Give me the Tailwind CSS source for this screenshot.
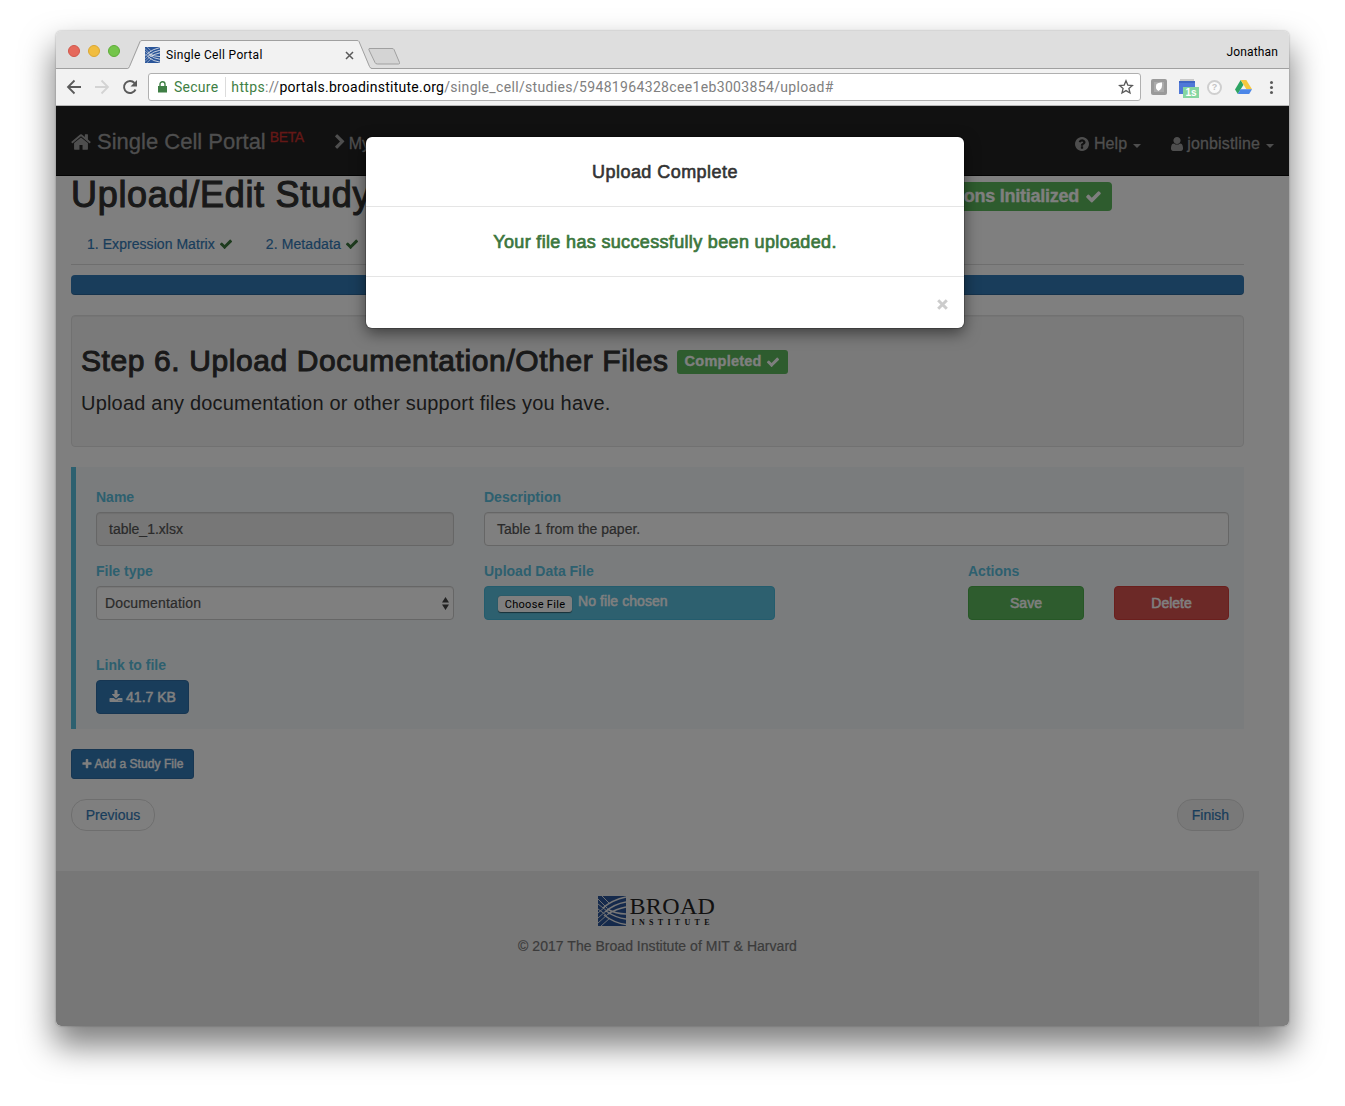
<!DOCTYPE html>
<html lang="en">
<head>
<meta charset="utf-8">
<title>Single Cell Portal</title>
<script src="https://cdn.jsdelivr.net/npm/@tailwindcss/browser@4"></script>
</head>
<body class="h-[1106px] w-[1345px] overflow-hidden bg-white px-14 pt-[31px] font-['Liberation_Sans',sans-serif] text-sm text-[#333]">
<svg class="hidden">
  <symbol id="check" viewBox="0 0 1792 1792"><path d="M1671 566q0 40-28 68l-724 724-136 136q-28 28-68 28t-68-28l-136-136-362-362q-28-28-28-68t28-68l136-136q28-28 68-28t68 28l294 295 656-657q28-28 68-28t68 28l136 136q28 28 28 68z"/></symbol>
  <symbol id="broad" viewBox="0 0 28 30">
    <path fill="#2a5599" d="M0 0h28v30H0z"/>
    <g fill="none" stroke="#eee"><path stroke-width="1.500" d="M5 12Q14 4 28 1M7 16Q16 8 28 6M8 15Q18 22 28 23M6 19Q16 27 28 28.500M10 18Q18 13 28 11M9 13Q18 18 28 18"/><path stroke-width=".9" d="M0 17L8 10M0 22L9 14M0 27L10 18M0 13L8 19M0 8L9 15M0 3L9 12M4 0L12 8M3 30L12 22"/></g>
  </symbol>
</svg>
<div class="relative h-[995px] w-[1233px] rounded-[5px] shadow-[0_18px_32px_2px_rgba(0,0,0,0.5),0_0_2px_rgba(0,0,0,0.35)]">
 <div class="flex h-full flex-col overflow-hidden rounded-[5px]">
  <!-- browser chrome -->
  <div class="relative flex h-[38px] shrink-0 items-start border-b border-[#a0a0a0] bg-[#dedede]">
    <div class="flex gap-2 pt-[14px] pl-3">
      <span class="size-3 rounded-full border border-[#d1574b] bg-[#e5695c]"></span>
      <span class="size-3 rounded-full border border-[#dba732] bg-[#f1bd40]"></span>
      <span class="size-3 rounded-full border border-[#5eac38] bg-[#74c54b]"></span>
    </div>
    <svg class="absolute top-[9px] left-[70px] h-[30px] w-[280px]" viewBox="0 0 280 30" fill="#f2f2f2" stroke="#a0a0a0"><path d="M0 28.500h2q1 0 2-2L15 1.500q.5-1 2-1H231q1.500 0 2 1L243 26.500q1 2 2.500 2V30H2z" stroke="none"/><path fill="none" d="M0 28.500h1.500q1 0 2-2L14 1.500q.5-1 2-1H231q1.500 0 2 1L243.500 26.500q1 2 2.500 2h34"/><path fill="#d4d4d4" d="M243 8.500h23q1.500 0 2 1l5.500 13q.5 1.500-1 1.500h-21q-2 0-2.500-1.500l-6-12.500q-.5-1.500.5-1.500z"/></svg>
    <div class="absolute top-[15px] left-[89px] flex h-[18px] w-[209px] items-center">
      <svg class="h-4 w-[15px]" viewBox="0 0 28 30" preserveAspectRatio="none"><use href="#broad" width="28" height="30"/></svg>
      <span class="mt-px ml-[6px] font-['Roboto',sans-serif] text-[12px] tracking-[0.33px] text-black">Single Cell Portal</span>
      <svg class="ml-auto size-[9px]" viewBox="0 0 9 9" stroke="#5a5a5a" stroke-width="1.500"><path d="M1 1l7 7M8 1l-7 7"/></svg>
    </div>
    <span class="mt-[13px] mr-[11px] ml-auto font-['Roboto',sans-serif] text-[12px] leading-4 tracking-[0.15px] text-black">Jonathan</span>
  </div>
  <div class="flex h-[37px] shrink-0 items-center border-b border-[#b6b6b6] bg-[#f2f2f2] pl-[10px]">
    <svg class="size-4" viewBox="0 0 16 16" fill="none" stroke="#5a5a5a" stroke-width="1.800"><path d="M15 8H2M8.500 1.500L2 8l6.500 6.500"/></svg>
    <svg class="ml-3 size-4" viewBox="0 0 16 16" fill="none" stroke="#d3d3d3" stroke-width="1.800"><path d="M1 8h13M7.500 1.500L14 8l-6.500 6.500"/></svg>
    <svg class="ml-3 size-4" viewBox="0 0 16 16" fill="none" stroke="#5a5a5a" stroke-width="1.900"><path d="M13.500 10.500A6 6 0 1 1 12.500 4"/><path fill="#5a5a5a" stroke="none" d="M15 1v6.500H8.500z"/></svg>
    <div class="ml-[10px] flex h-7 w-[993px] items-center rounded-[3px] border border-[#b0b0b0] bg-white pl-[9px] font-['Roboto',sans-serif] text-[14px]">
      <svg class="h-3 w-[9px]" viewBox="0 0 9 12"><path fill="#3f7f45" d="M0 5h9v6.500H0z"/><path fill="none" stroke="#3f7f45" stroke-width="1.400" d="M2 5V3.200a2.500 2.500 0 0 1 5 0V5"/></svg>
      <span class="ml-[7px] tracking-[0.25px] text-[#3f7f45]">Secure</span>
      <span class="mr-[5px] ml-[7px] h-5 w-px bg-[#dcdcdc]"></span>
      <span class="tracking-[0.34px] whitespace-nowrap text-[#808080]"><span class="text-[#3f7f45]">https</span>://<span class="tracking-[0.25px] text-black">portals.broadinstitute.org</span>/single_cell/studies/59481964328cee1eb3003854/upload#</span>
      <svg class="mr-[6px] ml-auto size-4" viewBox="0 0 16 16" fill="none" stroke="#5a5a5a" stroke-width="1.300"><path d="M8 1.800l1.800 4.300 4.600.4-3.500 3 1.100 4.500L8 11.600 4 14l1.100-4.500-3.500-3 4.600-.4z"/></svg>
    </div>
    <svg class="ml-[10px] size-4" viewBox="0 0 16 16"><rect width="16" height="16" rx="2" fill="#9a9a9a"/><path fill="#ababab" d="M3 3h10v10H3z"/><path fill="#fff" d="M5.500 5q2-1.800 5.500-1.500 1 6-3.500 8.500Q3.500 10 5.500 5z"/></svg>
    <div class="relative ml-3 h-[17px] w-4">
      <svg class="h-[17px] w-4" viewBox="0 0 16 17"><path fill="#c9c9c9" d="M1 0h14v3H1z"/><path fill="#4f78d8" d="M0 2h16v13H0z"/><path fill="#3f66c4" d="M0 2h16v2H0z"/></svg>
      <span class="absolute top-[8px] left-1 h-[11px] w-4 bg-[#85d6a0] text-center text-[10px] leading-[12px] font-bold text-white">1s</span>
    </div>
    <div class="ml-3 flex size-[15px] items-center justify-center rounded-full border-2 border-[#cfcfcf] bg-[#fafafa] text-[9px] font-bold text-[#c4c4c4]">?</div>
    <svg class="ml-[13px] h-[14px] w-[17px]" viewBox="0 0 17 14"><path fill="#2da463" d="M5.700 0L0 9.600 2.800 14 8.500 4.700z"/><path fill="#f6c83f" d="M5.700 0h5.600L17 9.300h-5.600z"/><path fill="#4b86e8" d="M5.600 9.300H17L14.200 14H2.800z"/></svg>
    <div class="ml-[18px] flex flex-col gap-[2px]"><span class="size-[3px] rounded-full bg-[#5a5a5a]"></span><span class="size-[3px] rounded-full bg-[#5a5a5a]"></span><span class="size-[3px] rounded-full bg-[#5a5a5a]"></span></div>
  </div>

  <!-- page -->
  <div class="relative flex min-h-0 flex-1 flex-col bg-white">
    <nav class="flex h-[70px] shrink-0 items-center border-b border-[#080808] bg-[#222] px-[15px] pt-[3px] text-[#9d9d9d]">
      <svg class="h-[22px] w-5" viewBox="64 0 1664 1792" fill="currentColor"><path d="M1472 992v480q0 26-19 45t-45 19h-384v-384h-256v384h-384q-26 0-45-19t-19-45v-480q0-1 .5-3t.5-3l575-474 575 474q1 2 1 6zm223-69l-62 74q-8 9-21 11h-3q-13 0-21-7l-692-577-692 577q-12 8-24 7-13-2-21-11l-62-74q-8-10-7-23.500t11-21.500l719-599q32-26 76-26t76 26l244 204v-195q0-14 9-23t23-9h192q14 0 23 9t9 23v408l219 182q10 8 11 21.500t-7 23.500z"/></svg>
      <span class="ml-[6px] text-[22px] leading-7 [-webkit-text-stroke:0.3px]">Single Cell Portal</span>
      <span class="mb-[10px] ml-1 text-[14px] tracking-[-0.4px] text-[#c9302c] [-webkit-text-stroke:0.3px]">BETA</span>
      <svg class="ml-[28px] size-4" viewBox="0 0 1792 1792" fill="currentColor"><path d="M1363 877l-742 742q-19 19-45 19t-45-19l-166-166q-19-19-19-45t19-45l531-531-531-531q-19-19-19-45t19-45l166-166q19-19 45-19t45 19l742 742q19 19 19 45t-19 45z"/></svg>
      <span class="mt-[3px] ml-px text-[16px] leading-5 [-webkit-text-stroke:0.3px]">My</span>
      <div class="ml-auto flex items-center pt-1 [-webkit-text-stroke:0.3px]">
        <svg class="size-[14px]" viewBox="128 128 1536 1536" fill="currentColor"><path d="M1024 1376v-192q0-14-9-23t-23-9h-192q-14 0-23 9t-9 23v192q0 14 9 23t23 9h192q14 0 23-9t9-23zm256-672q0-88-55.500-163t-138.500-116-170-41q-243 0-371 213-15 24 8 42l132 100q7 6 19 6 16 0 25-12 53-68 86-92 34-24 86-24 48 0 85.500 26t37.500 59q0 38-20 61t-68 45q-63 28-115.500 86.500t-52.500 125.500v36q0 14 9 23t23 9h192q14 0 23-9t9-23q0-19 21.500-49.500t54.500-49.500q32-18 49-28.500t46-35 44.500-48 28-60.500 12.500-81zm384 192q0 209-103 385.500t-279.500 279.500-385.500 103-385.500-103-279.500-279.500-103-385.500 103-385.500 279.500-279.500 385.500-103 385.500 103 279.500 279.500 103 385.500z"/></svg>
        <span class="ml-[5px] text-[16px] leading-5 tracking-[0.1px]">Help</span>
        <span class="mt-[3px] ml-[6px] border-x-4 border-t-4 border-x-transparent border-t-current"></span>
        <svg class="ml-[30px] h-[14px] w-3" viewBox="256 128 1280 1536" preserveAspectRatio="none" fill="currentColor"><path d="M1536 1399q0 109-62.500 187t-150.500 78h-854q-88 0-150.500-78t-62.500-187q0-85 8.500-160.500t31.500-152 58.500-131 94-89 134.500-34.500q131 128 313 128t313-128q76 0 134.500 34.500t94 89 58.500 131 31.500 152 8.500 160.500zm-256-887q0 159-112.500 271.500t-271.500 112.500-271.500-112.500-112.500-271.500 112.500-271.500 271.500-112.500 271.500 112.500 112.500 271.500z"/></svg>
        <span class="ml-1 text-[16px] leading-5 tracking-[0.15px]">jonbistline</span>
        <span class="mt-[3px] ml-[6px] border-x-4 border-t-4 border-x-transparent border-t-current"></span>
      </div>
    </nav>
    <main class="flex w-[1203px] flex-col px-[15px]">
      <div class="flex h-[48px] items-start justify-between pr-[132px]">
        <h1 class="-mt-px text-[36px] leading-10 tracking-[0.7px] whitespace-nowrap [-webkit-text-stroke:1.1px_#333]">Upload/Edit Study</h1>
        <span class="mt-[6px] flex h-[29px] w-[240px] items-center justify-end rounded-[4px] bg-[#5cb85c] pr-[10px] text-[18px] font-bold tracking-[-0.25px] text-white [-webkit-text-stroke:0.3px]">ons Initialized<svg class="ml-[6px] size-[17px]" fill="currentColor"><use href="#check"/></svg></span>
      </div>
      <div class="flex h-[41px] items-center gap-[33px] border-b border-[#ddd] pl-4 text-[#337ab7]">
        <span class="flex items-center tracking-[0.05px] [-webkit-text-stroke:0.2px]">1. Expression Matrix<svg class="ml-1 size-[14px]" fill="#3c763d"><use href="#check"/></svg></span>
        <span class="flex items-center tracking-[0.1px] [-webkit-text-stroke:0.2px]">2. Metadata<svg class="ml-1 size-[14px]" fill="#3c763d"><use href="#check"/></svg></span>
      </div>
      <div class="mt-[10px] h-5 rounded-[4px] bg-[#337ab7] shadow-[inset_0_-1px_0_rgba(0,0,0,0.15)]"></div>
      <section class="mt-5 h-[132px] rounded-[4px] border border-[#e3e3e3] bg-[#f5f5f5] px-[9px] pt-[28px] shadow-[inset_0_1px_1px_rgba(0,0,0,0.05)]">
        <h2 class="flex h-[35px] items-center text-[30px] whitespace-nowrap"><span class="tracking-[0.6px] [-webkit-text-stroke:1px_#333]">Step 6. Upload Documentation/Other Files</span><span class="ml-2 flex h-6 w-[111px] items-center justify-center rounded-[3px] bg-[#5cb85c] text-[14.500px] font-bold text-white"><span class="tracking-[0.25px] [-webkit-text-stroke:0.3px]">Completed</span><svg class="ml-1 size-[14px]" fill="currentColor"><use href="#check"/></svg></span></h2>
        <p class="mt-[9px] text-[20px] leading-[30px] tracking-[0.2px]">Upload any documentation or other support files you have.</p>
      </section>
      <section class="mt-5 flex h-[262px] flex-col border-l-[5px] border-[#5bc0de] bg-[#f4f8fa] px-5 pt-5 pr-[15px]">
        <div class="grid grid-cols-[358px_1fr] gap-x-[30px]">
          <div><label class="flex h-[25px] items-start leading-5 font-bold text-[#5bc0de]">Name</label><div class="flex h-[34px] items-center rounded-[4px] border border-[#ccc] bg-[#eee] px-3 text-[#555] shadow-[inset_0_1px_1px_rgba(0,0,0,0.075)] [-webkit-text-stroke:0.2px]">table_1.xlsx</div></div>
          <div><label class="flex h-[25px] items-start leading-5 font-bold text-[#5bc0de]">Description</label><div class="flex h-[34px] items-center rounded-[4px] border border-[#ccc] bg-white px-3 text-[#555] shadow-[inset_0_1px_1px_rgba(0,0,0,0.075)] [-webkit-text-stroke:0.2px]">Table 1 from the paper.</div></div>
        </div>
        <div class="mt-[15px] grid grid-cols-[358px_291px_1fr_116px_115px] items-end gap-x-[30px]">
          <div><label class="flex h-[25px] items-start leading-5 font-bold text-[#5bc0de]">File type</label><div class="flex h-[34px] items-center justify-between rounded-[4px] border border-[#ccc] bg-white pr-1 pl-2 tracking-[0.15px] text-[#555] shadow-[inset_0_1px_1px_rgba(0,0,0,0.075)] [-webkit-text-stroke:0.2px]">Documentation<svg class="h-[13px] w-[7px]" viewBox="0 0 7 13" fill="#444"><path d="M3.500 0L7 5.500H0zM3.500 13L0 7.500h7z"/></svg></div></div>
          <div><label class="flex h-[25px] items-start leading-5 font-bold text-[#5bc0de]">Upload Data File</label><div class="flex h-[34px] items-start rounded-[4px] border border-[#46b8da] bg-[#5bc0de] pl-[13px] text-white"><span class="mt-[9px] flex h-4 w-[74px] items-center justify-center rounded-[3px] bg-white pt-px font-['Roboto',sans-serif] text-[11px] tracking-[0.3px] text-black shadow-[0_0.5px_1px_rgba(0,0,0,0.5)]">Choose File</span><span class="mt-1 ml-[6px] leading-5 tracking-[0.07px] [-webkit-text-stroke:0.5px]">No file chosen</span></div></div>
          <div></div>
          <div><label class="flex h-[25px] items-start leading-5 font-bold text-[#5bc0de]">Actions</label><div class="flex h-[34px] items-center justify-center rounded-[4px] border border-[#4cae4c] bg-[#5cb85c] text-white [-webkit-text-stroke:0.5px]">Save</div></div>
          <div class="flex h-[34px] items-center justify-center rounded-[4px] border border-[#d43f3a] bg-[#d9534f] text-white [-webkit-text-stroke:0.5px]">Delete</div>
        </div>
        <label class="mt-[35px] flex h-[25px] items-start leading-5 font-bold text-[#5bc0de]">Link to file</label>
        <div class="flex h-[34px] w-[93px] items-center justify-center rounded-[4px] border border-[#2e6da4] bg-[#337ab7] text-white"><svg class="mb-px size-[14px]" viewBox="0 0 1792 1792" fill="currentColor"><path d="M1344 1344q0-26-19-45t-45-19-45 19-19 45 19 45 45 19 45-19 19-45zm256 0q0-26-19-45t-45-19-45 19-19 45 19 45 45 19 45-19 19-45zm128-224v320q0 40-28 68t-68 28h-1472q-40 0-68-28t-28-68v-320q0-40 28-68t68-28h465l135 136q58 56 136 56t136-56l136-136h464q40 0 68 28t28 68zm-325-569q17 41-14 70l-448 448q-18 19-45 19t-45-19l-448-448q-31-29-14-70 17-39 59-39h256v-448q0-26 19-45t45-19h256q26 0 45 19t19 45v448h256q42 0 59 39z"/></svg><span class="ml-[3px] [-webkit-text-stroke:0.5px]">41.7 KB</span></div>
      </section>
      <div class="mt-5 flex h-[30px] w-[123px] items-center justify-center rounded-[3px] border border-[#2e6da4] bg-[#337ab7] text-[12px] whitespace-nowrap text-white"><svg class="size-[10px]" viewBox="128 128 1536 1536" fill="currentColor"><path d="M1600 736v192q0 40-28 68t-68 28h-416v416q0 40-28 68t-68 28h-192q-40 0-68-28t-28-68v-416h-416q-40 0-68-28t-28-68v-192q0-40 28-68t68-28h416v-416q0-40 28-68t68-28h192q40 0 68 28t28 68v416h416q40 0 68 28t28 68z"/></svg><span class="mt-px ml-[3px] tracking-[0.05px] [-webkit-text-stroke:0.4px]">Add a Study File</span></div>
      <div class="mt-5 flex justify-between text-[#337ab7] [-webkit-text-stroke:0.2px]">
        <span class="flex h-8 w-[84px] items-center justify-center rounded-[15px] border border-[#ddd] bg-white">Previous</span>
        <span class="flex h-8 w-[67px] items-center justify-center rounded-[15px] border border-[#ddd] bg-[#f2f2f2]">Finish</span>
      </div>
    </main>
    <footer class="mt-10 flex w-[1203px] flex-1 flex-col items-center bg-[#eee] pt-[25px] text-[#777]">
      <div class="flex h-[30px] w-[120px] items-center justify-between">
        <svg class="h-[30px] w-7"><use href="#broad"/></svg>
        <div class="flex w-[88px] flex-col justify-between font-['Liberation_Serif',serif] text-[#222]"><span class="text-[24px] leading-[20px] tracking-[0.35px]">BROAD</span><span class="mt-[3px] pl-[2px] text-[8px] leading-[8px] font-bold tracking-[4.300px] whitespace-nowrap">INSTITUTE</span></div>
      </div>
      <p class="mt-[10px] leading-5 tracking-[0.03px] [-webkit-text-stroke:0.2px]">© 2017 The Broad Institute of MIT &amp; Harvard</p>
    </footer>
    <div class="absolute inset-0 bg-black/50"></div>
    <div class="absolute top-[31px] left-[310px] flex h-[191px] w-[598px] flex-col rounded-[6px] bg-white text-center text-[18px] shadow-[0_5px_15px_rgba(0,0,0,0.5),0_0_0_1px_rgba(0,0,0,0.2)]">
      <h4 class="h-[70px] border-b border-[#e5e5e5] pt-[25px] leading-5 tracking-[0.45px] [-webkit-text-stroke:0.6px_#333]">Upload Complete</h4>
      <p class="h-[70px] border-b border-[#e5e5e5] pt-[25px] leading-5 tracking-[0.34px] text-[#3c763d] [-webkit-text-stroke:0.7px_#3c763d]">Your file has successfully been uploaded.</p>
      <div class="flex flex-1 items-center justify-end pt-1 pr-4"><svg class="size-[11px]" viewBox="0 0 11 11" stroke="#ccc" stroke-width="3"><path d="M1.200 1.200l8.600 8.600M9.800 1.200L1.200 9.800"/></svg></div>
    </div>
  </div>
 </div>
</div>
</body>
</html>
